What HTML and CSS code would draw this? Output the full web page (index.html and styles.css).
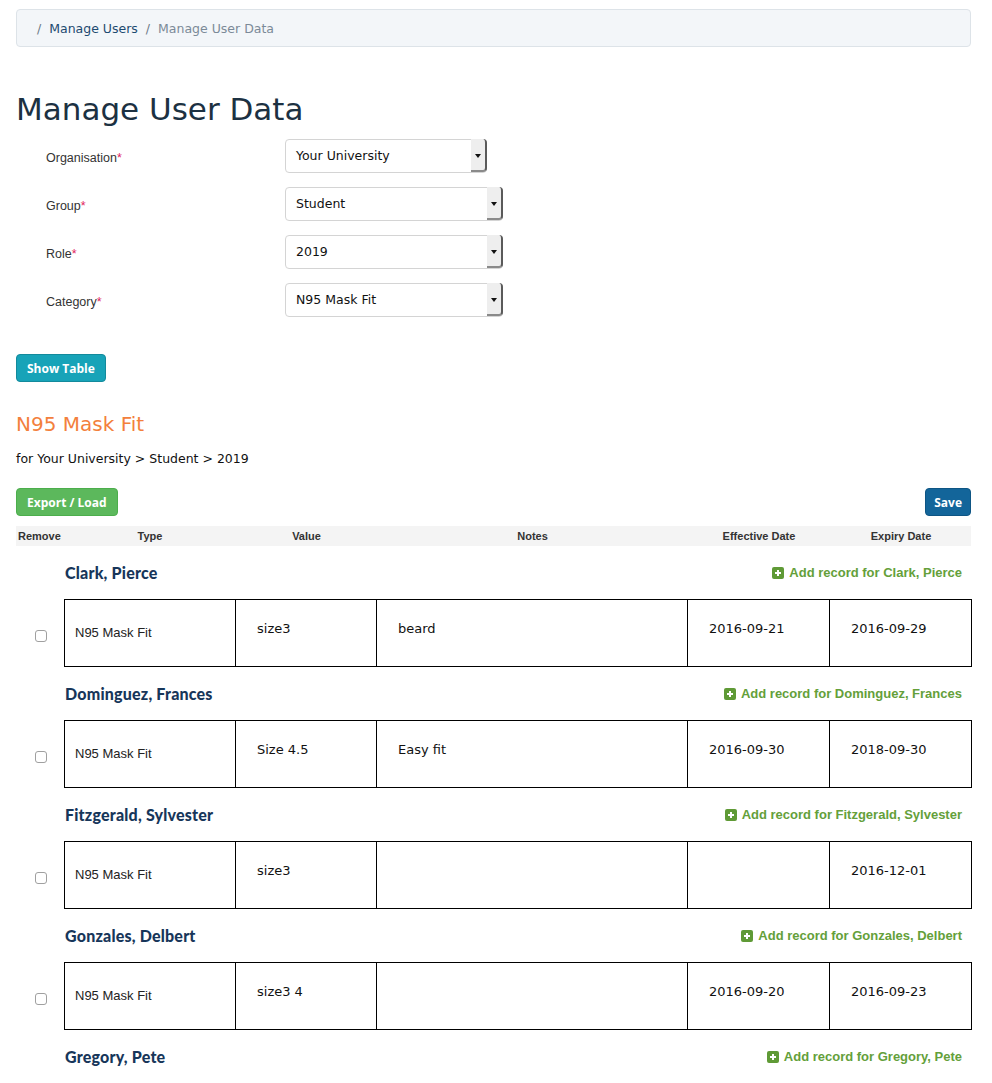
FILE: index.html
```html
<!DOCTYPE html>
<html>
<head>
<meta charset="utf-8">
<title>Manage User Data</title>
<link rel="stylesheet" href="styles.css">
</head>
<body>
<nav class="breadcrumb">
  <span class="crumb"><a href="#">Manage Users</a></span>
  <span class="crumb current">Manage User Data</span>
</nav>

<h1 class="page-title">Manage User Data</h1>

<form class="filters">
  <label class="f-label">Organisation<span class="req">*</span></label>
  <div class="select narrow"><span class="sel-value">Your University</span><span class="sel-arrow"></span></div>
  <label class="f-label">Group<span class="req">*</span></label>
  <div class="select"><span class="sel-value">Student</span><span class="sel-arrow"></span></div>
  <label class="f-label">Role<span class="req">*</span></label>
  <div class="select"><span class="sel-value">2019</span><span class="sel-arrow"></span></div>
  <label class="f-label">Category<span class="req">*</span></label>
  <div class="select"><span class="sel-value">N95 Mask Fit</span><span class="sel-arrow"></span></div>
</form>

<button class="btn btn-info show-table" type="button">Show Table</button>

<h2 class="section-title">N95 Mask Fit</h2>
<p class="section-sub">for Your University &gt; Student &gt; 2019</p>

<div class="toolbar">
  <button class="btn btn-success" type="button">Export / Load</button>
  <button class="btn btn-primary" type="button">Save</button>
</div>

<div class="grid head">
  <div class="h-remove">Remove</div>
  <div>Type</div>
  <div>Value</div>
  <div>Notes</div>
  <div>Effective Date</div>
  <div>Expiry Date</div>
</div>

<section class="person">
  <div class="person-row"><span class="person-name">Clark, Pierce</span><a class="add-link" href="#"><svg class="plus" viewBox="0 0 12 12"><rect width="12" height="12" rx="2" fill="#5f9a36"/><path d="M6 3v6M3 6h6" stroke="#fff" stroke-width="2"/></svg>Add record for Clark, Pierce</a></div>
  <div class="grid record">
    <div class="cb-cell"><input type="checkbox" class="cb"></div>
    <div class="cell type">N95 Mask Fit</div>
    <div class="cell">size3</div>
    <div class="cell">beard</div>
    <div class="cell">2016-09-21</div>
    <div class="cell">2016-09-29</div>
  </div>
</section>

<section class="person">
  <div class="person-row"><span class="person-name">Dominguez, Frances</span><a class="add-link" href="#"><svg class="plus" viewBox="0 0 12 12"><rect width="12" height="12" rx="2" fill="#5f9a36"/><path d="M6 3v6M3 6h6" stroke="#fff" stroke-width="2"/></svg>Add record for Dominguez, Frances</a></div>
  <div class="grid record">
    <div class="cb-cell"><input type="checkbox" class="cb"></div>
    <div class="cell type">N95 Mask Fit</div>
    <div class="cell">Size 4.5</div>
    <div class="cell">Easy fit</div>
    <div class="cell">2016-09-30</div>
    <div class="cell">2018-09-30</div>
  </div>
</section>

<section class="person">
  <div class="person-row"><span class="person-name">Fitzgerald, Sylvester</span><a class="add-link" href="#"><svg class="plus" viewBox="0 0 12 12"><rect width="12" height="12" rx="2" fill="#5f9a36"/><path d="M6 3v6M3 6h6" stroke="#fff" stroke-width="2"/></svg>Add record for Fitzgerald, Sylvester</a></div>
  <div class="grid record">
    <div class="cb-cell"><input type="checkbox" class="cb"></div>
    <div class="cell type">N95 Mask Fit</div>
    <div class="cell">size3</div>
    <div class="cell"></div>
    <div class="cell"></div>
    <div class="cell">2016-12-01</div>
  </div>
</section>

<section class="person">
  <div class="person-row"><span class="person-name">Gonzales, Delbert</span><a class="add-link" href="#"><svg class="plus" viewBox="0 0 12 12"><rect width="12" height="12" rx="2" fill="#5f9a36"/><path d="M6 3v6M3 6h6" stroke="#fff" stroke-width="2"/></svg>Add record for Gonzales, Delbert</a></div>
  <div class="grid record">
    <div class="cb-cell"><input type="checkbox" class="cb"></div>
    <div class="cell type">N95 Mask Fit</div>
    <div class="cell">size3 4</div>
    <div class="cell"></div>
    <div class="cell">2016-09-20</div>
    <div class="cell">2016-09-23</div>
  </div>
</section>

<section class="person">
  <div class="person-row"><span class="person-name">Gregory, Pete</span><a class="add-link" href="#"><svg class="plus" viewBox="0 0 12 12"><rect width="12" height="12" rx="2" fill="#5f9a36"/><path d="M6 3v6M3 6h6" stroke="#fff" stroke-width="2"/></svg>Add record for Gregory, Pete</a></div>
</section>
</body>
</html>
```

FILE: styles.css
```css
html, body {
  margin: 0;
  padding: 0;
  background: #fff;
}
body {
  padding: 9px 21px 0 16px;
  font-family: "DejaVu Sans", Verdana, sans-serif;
  font-size: 12.5px;
  color: #111;
}

/* breadcrumb */
.breadcrumb {
  display: flex;
  align-items: center;
  gap: 8px;
  height: 36px;
  padding: 0 20px;
  background: #f3f6f9;
  border: 1px solid #dde3e8;
  border-radius: 4px;
}
.crumb::before {
  content: "/";
  color: #6c7a88;
  padding-right: 8px;
}
.crumb a {
  color: #1d4a70;
  text-decoration: none;
}
.crumb.current {
  color: #7b8a98;
}

.page-title {
  margin: 45px 0 0 0;
  font-size: 31px;
  line-height: 34px;
  font-weight: normal;
  color: #1c3142;
}

/* filters */
.filters {
  display: grid;
  grid-template-columns: 239px max-content;
  row-gap: 14px;
  align-items: center;
  margin: 13px 0 0 0;
  padding-left: 30px;
}
.f-label {
  font-family: "Liberation Sans", Arial, sans-serif;
  font-size: 12.5px;
  color: #333;
  padding-top: 3px;
}
.req {
  color: #e0245e;
}
.select {
  display: flex;
  width: 218px;
  height: 34px;
  box-sizing: border-box;
  border: 1px solid #d4d4d4;
  border-radius: 4px;
  background: #fff;
}
.select.narrow {
  width: 202px;
}
.sel-value {
  flex: 1;
  display: flex;
  align-items: center;
  padding-left: 10px;
  padding-bottom: 1px;
  font-size: 12.5px;
  color: #111;
}
.sel-arrow {
  position: relative;
  width: 14px;
  margin: -1px -1px 0 0;
  background: #eeeeee;
  border-right: 2px solid #5a5a5a;
  border-bottom: 2px solid #8a8a8a;
  border-radius: 0 4px 4px 0;
}
.sel-arrow::after {
  content: "";
  position: absolute;
  left: 4px;
  top: 15px;
  border-left: 3.5px solid transparent;
  border-right: 3.5px solid transparent;
  border-top: 4px solid #111;
}

/* buttons */
.btn {
  height: 28px;
  padding: 0 10px;
  border-radius: 4px;
  font-family: "Open Sans", "Liberation Sans", sans-serif;
  font-weight: 700;
  font-size: 12px;
  color: #fff;
  cursor: pointer;
}
.btn-info {
  background: #17a3b8;
  border: 1px solid #138a9c;
}
.btn-success {
  background: #5cb85c;
  border: 1px solid #4cae4c;
}
.btn-primary {
  background: #13659a;
  border: 1px solid #0e5584;
  padding: 0 8px;
}
.show-table {
  display: block;
  margin-top: 37px;
}

.section-title {
  margin: 30px 0 0 0;
  font-size: 20px;
  line-height: 24px;
  font-weight: normal;
  color: #f3803c;
}
.section-sub {
  margin: 15px 0 0 0;
  font-size: 12.5px;
  line-height: 16px;
  color: #111;
}

.toolbar {
  display: flex;
  justify-content: space-between;
  margin-top: 21px;
}

/* grid */
.grid {
  display: grid;
  grid-template-columns: 48px 172px 141px 311px 142px 142px;
}
.head {
  margin-top: 10px;
  height: 20px;
  align-items: center;
  background: #f4f4f4;
  font-family: "Liberation Sans", Arial, sans-serif;
  font-weight: 700;
  font-size: 11px;
  color: #333;
  text-align: center;
}
.head .h-remove {
  text-align: left;
  padding-left: 2px;
}

.person-row {
  display: flex;
  justify-content: space-between;
  align-items: center;
  height: 53px;
  padding: 0 9px 0 49px;
}
.person-name {
  font-family: "Lato", "Liberation Sans", sans-serif;
  font-weight: 900;
  font-size: 16px;
  letter-spacing: 0.2px;
  color: #17365a;
}
.add-link {
  display: flex;
  align-items: center;
  gap: 5px;
  font-family: "Liberation Sans", Arial, sans-serif;
  font-weight: 700;
  font-size: 13px;
  color: #64a03a;
  text-decoration: none;
}
.plus {
  width: 12px;
  height: 12px;
}

.record {
  height: 68px;
}
.cb-cell {
  display: flex;
  align-items: center;
  justify-content: center;
  padding-top: 5px;
}
.cb {
  appearance: none;
  -webkit-appearance: none;
  width: 12px;
  height: 12px;
  margin: 0 0 0 1px;
  border: 1px solid #a0a0a0;
  border-radius: 3px;
  background: #fff;
}
.cell {
  border: 1px solid #000;
  border-left: none;
  padding: 21px 0 0 21px;
  font-size: 13px;
  line-height: 16px;
  color: #111;
}
.cell.type {
  border-left: 1px solid #000;
  display: flex;
  align-items: center;
  padding: 0 0 0 10px;
  font-family: "Liberation Sans", Arial, sans-serif;
  color: #222;
}
```
